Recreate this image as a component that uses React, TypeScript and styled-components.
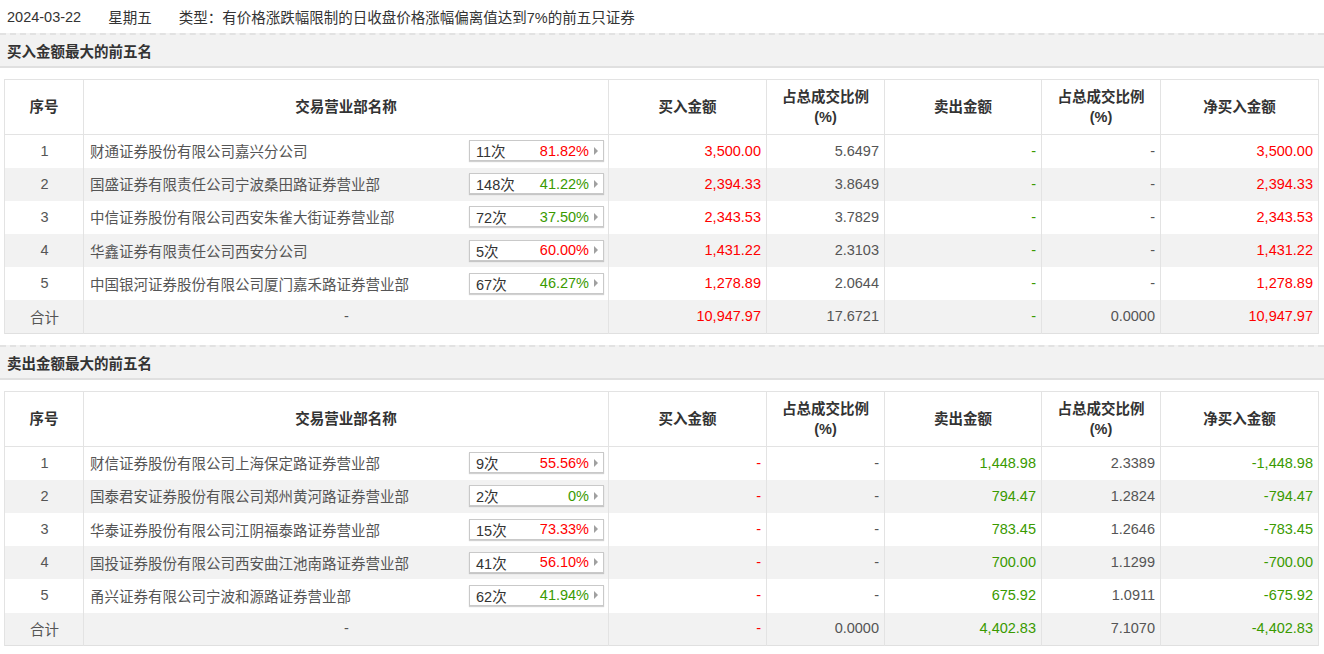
import React from "react";
import styled, { createGlobalStyle } from "styled-components";

const GlobalStyle = createGlobalStyle`
  html, body { margin: 0; padding: 0; background: #fff; }
  body {
    font-family: "Liberation Sans", Arial, "Noto Sans CJK SC", sans-serif;
    font-size: 14.5px;
    color: #555;
  }
`;

const Page = styled.div`
  width: 1324px;
`;

const TopBar = styled.div`
  display: flex;
  gap: 27px;
  height: 33px;
  align-items: center;
  padding: 0 7px;
  color: #333;
`;

const SectionHeader = styled.div<{ $first?: boolean }>`
  margin-top: ${(p) => (p.$first ? "0" : "11px")};
  border-top: 2px dashed #e2e2e2;
  border-bottom: 2px solid #e0e0e0;
  background: #f2f2f2;
  height: 31px;
  display: flex;
  align-items: center;
  padding-left: 7px;
  font-weight: bold;
  color: #333;
`;

const Table = styled.table`
  margin: 11px 0 0 4px;
  width: 1314px;
  border-collapse: collapse;
  table-layout: fixed;
  border: 1px solid #e0e0e0;
`;

const Th = styled.th`
  height: 54px;
  border: 1px solid #e3e3e3;
  font-weight: bold;
  color: #333;
  text-align: center;
  line-height: 20px;
  padding: 0 4px;
`;

const Tr = styled.tr<{ $alt?: boolean }>`
  height: 33.2px;
  background: ${(p) => (p.$alt ? "#f2f2f2" : "#fff")};
`;

const Td = styled.td<{ $align?: "left" | "center" | "right"; $color?: string }>`
  border-left: 1px solid #e3e3e3;
  border-right: 1px solid #e3e3e3;
  text-align: ${(p) => p.$align ?? "right"};
  color: ${(p) => p.$color ?? "#555"};
  padding: 0 5px 1px 6px;
  white-space: nowrap;
  vertical-align: middle;
`;

const NameCell = styled.div`
  display: flex;
  align-items: center;
  justify-content: space-between;
`;

const Badge = styled.div`
  box-sizing: border-box;
  width: 135px;
  height: 21px;
  margin-right: -1px;
  border: 1px solid #c9c9c9;
  box-shadow: 0 1px 1px rgba(0, 0, 0, 0.18);
  background: #fff;
  display: flex;
  align-items: center;
  padding: 0 5px 0 6px;
`;

const Count = styled.span`
  color: #333;
  flex: 1;
`;

const Pct = styled.span<{ $color: string }>`
  color: ${(p) => p.$color};
`;

const Arrow = styled.span`
  width: 0;
  height: 0;
  margin-left: 5px;
  border-top: 4px solid transparent;
  border-bottom: 4px solid transparent;
  border-left: 4px solid #a0a0a0;
`;

const RED = "#ff0000";
const GREEN = "#3a9a00";
const GRAY = "#555";

type Row = {
  name: string;
  count: string;
  pct: string;
  buy: string;
  buyPct: string;
  sell: string;
  sellPct: string;
  net: string;
};

const buyRows: Row[] = [
  { name: "财通证券股份有限公司嘉兴分公司", count: "11次", pct: "81.82%", buy: "3,500.00", buyPct: "5.6497", sell: "-", sellPct: "-", net: "3,500.00" },
  { name: "国盛证券有限责任公司宁波桑田路证券营业部", count: "148次", pct: "41.22%", buy: "2,394.33", buyPct: "3.8649", sell: "-", sellPct: "-", net: "2,394.33" },
  { name: "中信证券股份有限公司西安朱雀大街证券营业部", count: "72次", pct: "37.50%", buy: "2,343.53", buyPct: "3.7829", sell: "-", sellPct: "-", net: "2,343.53" },
  { name: "华鑫证券有限责任公司西安分公司", count: "5次", pct: "60.00%", buy: "1,431.22", buyPct: "2.3103", sell: "-", sellPct: "-", net: "1,431.22" },
  { name: "中国银河证券股份有限公司厦门嘉禾路证券营业部", count: "67次", pct: "46.27%", buy: "1,278.89", buyPct: "2.0644", sell: "-", sellPct: "-", net: "1,278.89" },
];

const sellRows: Row[] = [
  { name: "财信证券股份有限公司上海保定路证券营业部", count: "9次", pct: "55.56%", buy: "-", buyPct: "-", sell: "1,448.98", sellPct: "2.3389", net: "-1,448.98" },
  { name: "国泰君安证券股份有限公司郑州黄河路证券营业部", count: "2次", pct: "0%", buy: "-", buyPct: "-", sell: "794.47", sellPct: "1.2824", net: "-794.47" },
  { name: "华泰证券股份有限公司江阴福泰路证券营业部", count: "15次", pct: "73.33%", buy: "-", buyPct: "-", sell: "783.45", sellPct: "1.2646", net: "-783.45" },
  { name: "国投证券股份有限公司西安曲江池南路证券营业部", count: "41次", pct: "56.10%", buy: "-", buyPct: "-", sell: "700.00", sellPct: "1.1299", net: "-700.00" },
  { name: "甬兴证券有限公司宁波和源路证券营业部", count: "62次", pct: "41.94%", buy: "-", buyPct: "-", sell: "675.92", sellPct: "1.0911", net: "-675.92" },
];

const pctColor = (p: string) => (parseFloat(p) >= 50 ? RED : GREEN);

const widths = [79, 525, 158, 118, 157, 119, 158];

function DataTable({
  rows,
  total,
  buyColor,
  sellColor,
  netColor,
}: {
  rows: Row[];
  total: Omit<Row, "name" | "count" | "pct">;
  buyColor: string;
  sellColor: string;
  netColor: string;
}) {
  return (
    <Table>
      <colgroup>
        {widths.map((w, i) => (
          <col key={i} style={{ width: w }} />
        ))}
      </colgroup>
      <thead>
        <tr>
          <Th>序号</Th>
          <Th>交易营业部名称</Th>
          <Th>买入金额</Th>
          <Th>
            占总成交比例
            <br />
            (%)
          </Th>
          <Th>卖出金额</Th>
          <Th>
            占总成交比例
            <br />
            (%)
          </Th>
          <Th>净买入金额</Th>
        </tr>
      </thead>
      <tbody>
        {rows.map((r, i) => (
          <Tr key={i} $alt={i % 2 === 1}>
            <Td $align="center">{i + 1}</Td>
            <Td $align="left">
              <NameCell>
                <span>{r.name}</span>
                <Badge>
                  <Count>{r.count}</Count>
                  <Pct $color={pctColor(r.pct)}>{r.pct}</Pct>
                  <Arrow />
                </Badge>
              </NameCell>
            </Td>
            <Td $color={buyColor}>{r.buy}</Td>
            <Td $color={GRAY}>{r.buyPct}</Td>
            <Td $color={sellColor}>{r.sell}</Td>
            <Td $color={GRAY}>{r.sellPct}</Td>
            <Td $color={netColor}>{r.net}</Td>
          </Tr>
        ))}
        <Tr $alt>
          <Td $align="center">合计</Td>
          <Td $align="center">-</Td>
          <Td $color={buyColor}>{total.buy}</Td>
          <Td $color={GRAY}>{total.buyPct}</Td>
          <Td $color={sellColor}>{total.sell}</Td>
          <Td $color={GRAY}>{total.sellPct}</Td>
          <Td $color={netColor}>{total.net}</Td>
        </Tr>
      </tbody>
    </Table>
  );
}

export default function App() {
  return (
    <Page>
      <GlobalStyle />
      <TopBar>
        <span>2024-03-22</span>
        <span>星期五</span>
        <span>类型：有价格涨跌幅限制的日收盘价格涨幅偏离值达到7%的前五只证券</span>
      </TopBar>
      <SectionHeader $first>买入金额最大的前五名</SectionHeader>
      <DataTable
        rows={buyRows}
        total={{ buy: "10,947.97", buyPct: "17.6721", sell: "-", sellPct: "0.0000", net: "10,947.97" }}
        buyColor={RED}
        sellColor={GREEN}
        netColor={RED}
      />
      <SectionHeader>卖出金额最大的前五名</SectionHeader>
      <DataTable
        rows={sellRows}
        total={{ buy: "-", buyPct: "0.0000", sell: "4,402.83", sellPct: "7.1070", net: "-4,402.83" }}
        buyColor={RED}
        sellColor={GREEN}
        netColor={GREEN}
      />
    </Page>
  );
}
